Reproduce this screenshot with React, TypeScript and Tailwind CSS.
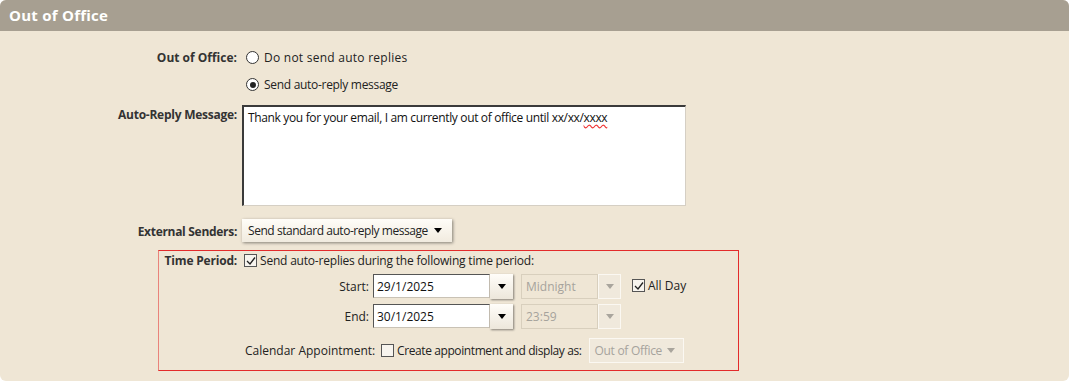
import React from 'react'

const font = { fontFamily: '"Open Sans", "Noto Sans", sans-serif' }

const Caret: React.FC<{ muted?: boolean }> = ({ muted }) => (
    <span className={`inline-block w-0 h-0 border-l-[4px] border-r-[4px] border-t-[5px] border-l-transparent border-r-transparent shrink-0 ${muted ? 'border-t-[#a9a59d]' : 'border-t-black'}`} />
)

const Radio: React.FC<{ checked?: boolean; label: string; track: string }> = ({ checked, label, track }) => (
    <label className='flex items-center gap-[5px] text-[#222]'>
        <span className='w-[13px] h-[13px] rounded-full border border-[#333] bg-white flex items-center justify-center'>
            {checked && <span className='w-[6px] h-[6px] rounded-full bg-[#222]' />}
        </span>
        <span className={track}>{label}</span>
    </label>
)

const Check: React.FC<{ checked?: boolean }> = ({ checked }) => (
    <span className='w-[13px] h-[13px] border border-[#555] bg-[#f7f4ee] flex items-center justify-center shrink-0'>
        {checked && (
            <svg width='10' height='10' viewBox='0 0 10 10'>
                <path d='M1 5 L4 8 L9 1.5' fill='none' stroke='#222' strokeWidth='1.3' />
            </svg>
        )}
    </span>
)

const DateField: React.FC<{ value: string }> = ({ value }) => (
    <div className='flex items-start h-[25px]'>
        <div className='w-[117px] h-[24px] bg-white border-t border-l border-t-[#555] border-l-[#555] border-b border-r border-b-[#c9c2b5] border-r-[#c9c2b5] flex items-center pl-[3px] text-[#111]'>
            {value}
        </div>
        <div className='w-[23px] h-[25px] bg-gradient-to-b from-[#fffdf9] to-[#ede7db] shadow-[1px_1px_2px_rgba(0,0,0,0.45)] flex items-center justify-center'>
            <Caret />
        </div>
    </div>
)

const TimeField: React.FC<{ value: string }> = ({ value }) => (
    <div className='flex items-stretch h-[25px]'>
        <div className='w-[77px] border border-[#d8cfbd] flex items-center pl-[4px] text-[#a6a39c]'>
            {value}
        </div>
        <div className='w-[23px] border border-[#fbf8f2] bg-[#f0e9dc] flex items-center justify-center'>
            <Caret muted />
        </div>
    </div>
)

const App: React.FC = () => {
    return (
        <div className='w-[1074px] h-[383px] bg-white text-[12px] leading-[17px]' style={font}>
            <div className='w-[1069px] h-[381px] rounded-[6px] overflow-hidden bg-[#efe6d5]'>
                <div className='h-[31px] bg-[#a79f91] flex items-center pl-[9px] text-white font-bold text-[15px] tracking-[0.25px]'>
                    Out of Office
                </div>

                <div className='grid grid-cols-[237px_1fr] gap-x-[5px] pt-[11px]'>
                    <div className='text-right font-bold text-[#333] pt-[7px]'>Out of Office:</div>
                    <div className='flex flex-col gap-[10px] pt-[7px] pl-[4px]'>
                        <Radio label='Do not send auto replies' track='tracking-[0.25px]' />
                        <Radio checked label='Send auto-reply message' track='tracking-[-0.3px]' />
                    </div>

                    <div className='text-right font-bold text-[#333] pt-[13px] tracking-[-0.25px]'>Auto-Reply Message:</div>
                    <div className='pt-[12px]'>
                        <div className='w-[444px] h-[101px] bg-white border-t-2 border-l-2 border-t-[#3a3a3a] border-l-[#3a3a3a] border-b border-r border-b-[#d5cfc4] border-r-[#d5cfc4] px-[4px] pt-[2px] text-[#111] tracking-[-0.35px]'>
                            Thank you for your email, I am currently out of office until xx/xx/<span className='underline decoration-wavy decoration-[#e33] underline-offset-2'>xxxx</span>
                        </div>
                    </div>

                    <div className='text-right font-bold text-[#333] pt-[17px] tracking-[-0.3px]'>External Senders:</div>
                    <div className='pt-[13px]'>
                        <div className='w-[210px] h-[23px] bg-gradient-to-b from-[#fffdf8] to-[#f1ebdf] shadow-[1px_1px_3px_rgba(0,0,0,0.45)] flex items-center gap-[6px] pl-[6px] text-[#222] whitespace-nowrap'>
                            <span className='tracking-[-0.45px]'>Send standard auto-reply message</span>
                            <Caret />
                        </div>
                    </div>
                </div>

                <div className='mt-[8px] ml-[158px] w-[581px] h-[121px] border border-[#e32b2b] border-l-[#e9837b]'>
                    <div className='grid grid-cols-[78px_1fr] gap-x-[7px] pt-[1px]'>
                        <div className='text-right font-bold text-[#333] tracking-[-0.2px]'>Time Period:</div>
                        <div className='flex items-center gap-[3px] text-[#222] tracking-[-0.2px]'>
                            <Check checked />
                            Send auto-replies during the following time period:
                        </div>
                    </div>

                    <div className='grid grid-cols-[210px_auto_auto_auto] justify-start gap-y-[5px] items-center mt-[5px]'>
                        <div className='text-right text-[#222]'>Start:</div>
                        <div className='ml-[4px]'><DateField value='29/1/2025' /></div>
                        <div className='ml-[8px]'><TimeField value='Midnight' /></div>
                        <div className='flex items-center gap-[3px] text-[#222] ml-[11px] -mt-[2px]'>
                            <Check checked />
                            All Day
                        </div>

                        <div className='text-right text-[#222]'>End:</div>
                        <div className='ml-[4px]'><DateField value='30/1/2025' /></div>
                        <div className='ml-[8px]'><TimeField value='23:59' /></div>
                        <div />
                    </div>

                    <div className='flex items-center mt-[9px] ml-[86px] text-[#222]'>
                        <span className='w-[136px]'>Calendar Appointment:</span>
                        <div className='flex items-center gap-[3px] whitespace-nowrap tracking-[-0.4px]'>
                            <Check />
                            Create appointment and display as:
                        </div>
                        <div className='ml-[7px] w-[95px] h-[25px] border border-[#fbf8f2] bg-[#f0e9dc] flex items-center justify-between pl-[5px] pr-[8px] text-[#a6a39c] whitespace-nowrap tracking-[-0.3px]'>
                            Out of Office
                            <Caret muted />
                        </div>
                    </div>
                </div>
            </div>
        </div>
    )
}

export default App
